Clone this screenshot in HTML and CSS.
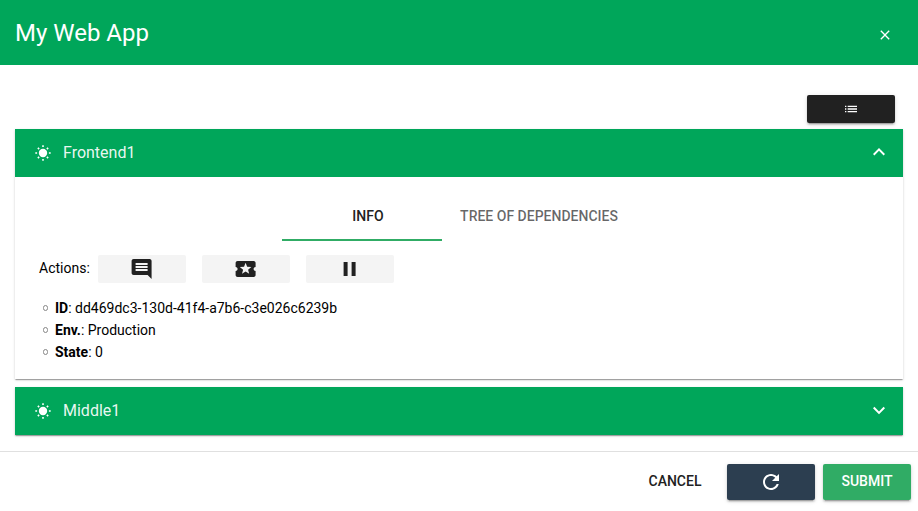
FILE: index.html
```html
<!DOCTYPE html>
<html lang="en">
<head>
<meta charset="utf-8">
<title>My Web App</title>
<link rel="stylesheet" href="styles.css">
</head>
<body>
<svg class="sprite" aria-hidden="true">
  <symbol id="sun" viewBox="0 0 16 16">
    <circle cx="8" cy="8" r="4.2"/>
    <path d="M7.2.3h1.6v1.8H7.2zM7.2 13.9h1.6v1.8H7.2zM.3 7.2h1.8v1.6H.3zM13.9 7.2h1.8v1.6h-1.8zM2.3 3.4l1.1-1.1 1.3 1.3-1.1 1.1zM11.3 12.4l1.1-1.1 1.3 1.3-1.1 1.1zM12.6 2.3l1.1 1.1-1.3 1.3-1.1-1.1zM3.6 11.3l1.1 1.1-1.3 1.3-1.1-1.1z"/>
  </symbol>
</svg>
<div class="dialog">
  <header class="titlebar">
    <h1 class="title">My Web App</h1>
    <svg class="icon small" viewBox="0 0 24 24"><path d="M19 6.41L17.59 5 12 10.59 6.41 5 5 6.41 10.59 12 5 17.59 6.41 19 12 13.41 17.59 19 19 17.59 13.41 12z"/></svg>
  </header>
  <main class="content">
    <div class="toolbar">
      <button class="btn short dark"><svg class="icon small" viewBox="0 0 24 24"><path d="M3 13h2v-2H3v2zm0 4h2v-2H3v2zm0-8h2V7H3v2zm4 4h14v-2H7v2zm0 4h14v-2H7v2zM7 7v2h14V7H7z"/></svg></button>
    </div>
    <section class="panel">
      <div class="panel-header">
        <svg class="icon small"><use href="#sun"/></svg>
        <span class="panel-title">Frontend1</span>
        <svg class="icon chevron-up" viewBox="0 0 24 24"><path d="M7.41 15.41L12 10.83l4.59 4.58L18 14l-6-6-6 6z"/></svg>
      </div>
      <div class="panel-body">
        <nav class="tabs">
          <div class="tab active">INFO</div>
          <div class="tab wide">TREE OF DEPENDENCIES</div>
        </nav>
        <div class="actions">
          <span class="actions-label">Actions:</span>
          <button class="btn short flat"><svg class="icon" viewBox="0 0 24 24"><path d="M21.99 4c0-1.1-.89-2-1.99-2H4c-1.1 0-2 .9-2 2v12c0 1.1.9 2 2 2h14l4 4-.01-18zM18 14H6v-2h12v2zm0-3H6V9h12v2zm0-3H6V6h12v2z"/></svg></button>
          <button class="btn short flat"><svg class="icon" viewBox="0 0 24 24"><path d="M20 12c0-1.1.9-2 2-2V6c0-1.1-.9-2-2-2H4c-1.1 0-1.99.9-1.99 2v4c1.1 0 1.99.9 1.99 2s-.89 2-2 2v4c0 1.1.9 2 2 2h16c1.1 0 2-.9 2-2v-4c-1.1 0-2-.9-2-2zm-4.42 4.8L12 14.5l-3.58 2.3 1.08-4.12-3.29-2.69 4.24-.25L12 5.8l1.54 3.95 4.24.25-3.29 2.69 1.09 4.11z"/></svg></button>
          <button class="btn short flat"><svg class="icon" viewBox="0 0 24 24"><path d="M6 19h4V5H6v14zm8-14v14h4V5h-4z"/></svg></button>
        </div>
        <ul class="details">
          <li><b>ID</b>: dd469dc3-130d-41f4-a7b6-c3e026c6239b</li>
          <li><b>Env.</b>: Production</li>
          <li><b>State</b>: 0</li>
        </ul>
      </div>
    </section>
    <section class="panel">
      <div class="panel-header">
        <svg class="icon small"><use href="#sun"/></svg>
        <span class="panel-title">Middle1</span>
        <svg class="icon" viewBox="0 0 24 24"><path d="M7.41 7.84L12 12.42l4.59-4.58L18 9.25l-6 6-6-6z"/></svg>
      </div>
    </section>
  </main>
  <footer class="footer">
    <button class="btn text">CANCEL</button>
    <button class="btn navy"><svg class="icon" viewBox="0 0 24 24"><path d="M17.65 6.35C16.2 4.9 14.21 4 12 4c-4.42 0-7.99 3.58-7.99 8s3.57 8 7.99 8c3.73 0 6.84-2.55 7.73-6h-2.08c-.82 2.33-3.04 4-5.65 4-3.31 0-6-2.69-6-6s2.69-6 6-6c1.66 0 3.14.69 4.22 1.78L13 11h7V4l-2.35 2.35z"/></svg></button>
    <button class="btn green">SUBMIT</button>
  </footer>
</div>
</body>
</html>
```

FILE: styles.css
```css
*, ::before { box-sizing: border-box; }

body {
  margin: 0;
  background: #fff;
  color: #000;
  font: 14px/22px Roboto, sans-serif;
}

.sprite { display: none; }

.dialog {
  display: flex;
  flex-direction: column;
  height: 511px;
  overflow: hidden;
}

.icon {
  display: block;
  flex: none;
  width: 24px;
  height: 24px;
  fill: currentColor;
}

.icon.small { width: 16px; height: 16px; }

.titlebar {
  display: flex;
  align-items: center;
  justify-content: space-between;
  height: 65px;
  padding: 5px 25px 0 15px;
  background: #00a65a;
  color: #fff;
}

.title {
  margin: 0 0 5px;
  font-size: 24px;
  font-weight: 400;
  line-height: 32px;
}

.content {
  display: flex;
  flex-direction: column;
  flex: 1;
  gap: 8px;
  padding: 30px 15px 0;
}

.toolbar {
  display: flex;
  justify-content: flex-end;
  margin-bottom: -2px;
  padding-right: 8px;
}

.btn {
  display: flex;
  align-items: center;
  justify-content: center;
  width: 88px;
  height: 36px;
  padding: 0;
  border: 0;
  border-radius: 2px;
  color: #fff;
  font: 500 14px/20px Roboto, sans-serif;
  box-shadow: 0 3px 1px -2px rgba(0, 0, 0, .2), 0 2px 2px rgba(0, 0, 0, .14), 0 1px 5px rgba(0, 0, 0, .12);
}

.btn.short { height: 28px; }
.btn.dark { background: #212121; }
.btn.navy { background: #2c3e50; }
.btn.green { background: #30ac65; padding-bottom: 2px; }
.btn.flat { background: #f4f4f4; color: #212121; box-shadow: none; }
.btn.flat .icon { transform: translateX(-.4px); }
.btn.text { background: none; color: #212121; box-shadow: none; padding-bottom: 2px; }

.panel {
  background: #fff;
  box-shadow: 0 2px 1px -1px rgba(0, 0, 0, .2), 0 1px 1px rgba(0, 0, 0, .14), 0 1px 3px rgba(0, 0, 0, .12);
}

.panel-header {
  display: flex;
  align-items: center;
  height: 48px;
  padding: 0 12px 0 20px;
  background: #00a65a;
  color: #fff;
}

.panel-title {
  flex: 1;
  margin-left: 12px;
  color: rgba(255, 255, 255, .93);
  font-size: 16px;
}

.chevron-up { margin-bottom: 2px; }

.panel-body { height: 202px; padding: 16px 24px 0; }

.tabs {
  display: flex;
  justify-content: center;
  height: 48px;
}

.tab {
  width: 160px;
  padding-top: 12px;
  color: rgba(0, 0, 0, .6);
  font-weight: 500;
  text-align: center;
}

.tab.active {
  width: 160px;
  padding-left: 12px;
  border-bottom: 2px solid #30ac65;
  color: #212121;
}

.tab.wide { width: 194px; }

.actions {
  display: flex;
  align-items: center;
  gap: 16px;
  margin-top: 14px;
}

.actions-label { margin-right: -8px; padding-bottom: 2px; }

.details {
  margin: 14px 0 0;
  padding-left: 4px;
  list-style: none;
}

.details li { display: flex; align-items: center; white-space: pre; }

.details li::before {
  content: "";
  width: 5px;
  height: 6px;
  margin: 0 7px 0 0;
  border: 1px solid #888;
  border-radius: 2.5px;
}

.footer {
  display: flex;
  gap: 8px;
  justify-content: flex-end;
  height: 60px;
  padding: 12px 7px 0;
  border-top: 1px solid #e0e0e0;
}
```
